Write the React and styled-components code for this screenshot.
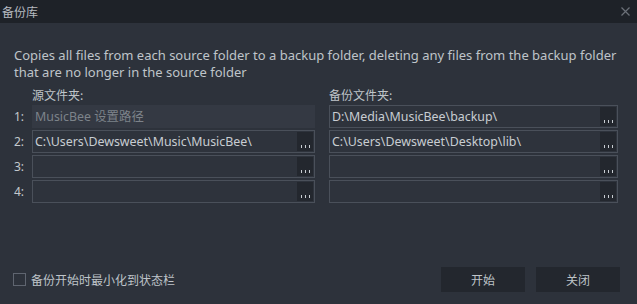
import React from "react";
import styled, { createGlobalStyle } from "styled-components";

const Global = createGlobalStyle`
  html, body { margin: 0; padding: 0; background: #2d323b; }
  body { font-family: "Noto Sans", "Noto Sans CJK SC", sans-serif; }
`;

const Window = styled.div`
  width: 637px;
  height: 304px;
  background: #2d323b;
  display: flex;
  flex-direction: column;
  color: #c3c8cd;
  overflow: hidden;
`;

const TitleBar = styled.div`
  height: 23px;
  background: #1e2228;
  display: flex;
  align-items: center;
  justify-content: space-between;
  padding: 0 7px 0 2px;
  flex-shrink: 0;
`;

const Title = styled.span`
  font-size: 12px;
  color: #b6bbc0;
  font-family: "Noto Sans CJK SC", sans-serif;
`;

const Body = styled.div`
  flex: 1;
  display: flex;
  flex-direction: column;
  padding: 24px 14px 0 14px;
`;

const Desc = styled.p`
  margin: 0;
  font-size: 13px;
  line-height: 17px;
  color: #bfc4c9;
  white-space: nowrap;
`;

const Table = styled.div`
  display: grid;
  grid-template-columns: 18px 283px 303px;
  column-gap: 0;
  row-gap: 2px;
  margin-top: 6px;
`;

const HeadLabel = styled.div`
  font-size: 12px;
  font-family: "Noto Sans CJK SC", sans-serif;
  color: #bfc4c9;
  height: 16px;
  line-height: 16px;
  margin-left: ${(p) => (p.$right ? "14px" : "0")};
`;

const RowNum = styled.div`
  font-size: 12px;
  color: #c3c8cd;
  height: 23px;
  line-height: 23px;
`;

const Field = styled.div`
  height: 23px;
  box-sizing: border-box;
  border: 1px solid ${(p) => (p.$disabled ? "#343943" : "#4a505a")};
  background: ${(p) => (p.$disabled ? "#343943" : "#2e333c")};
  display: flex;
  align-items: stretch;
  margin-left: ${(p) => (p.$right ? "14px" : "0")};
`;

const FieldText = styled.div`
  flex: 1;
  font-size: 12.4px;
  line-height: 21px;
  padding-left: 2px;
  color: ${(p) => (p.$disabled ? "#7d838a" : "#c8cdd2")};
  white-space: nowrap;
  overflow: hidden;
  font-family: "Noto Sans", "Noto Sans CJK SC", sans-serif;
`;

const Browse = styled.div`
  width: 16px;
  margin: 1px 1px 1px 0;
  background: #23272e;
  display: flex;
  align-items: flex-end;
  justify-content: center;
  padding-bottom: 3px;
  box-sizing: border-box;
  gap: 3px;
`;

const Dot = styled.span`
  width: 1px;
  height: 3px;
  background: #c8cdd2;
`;

const Footer = styled.div`
  margin-top: auto;
  display: flex;
  align-items: center;
  padding: 0 17px 12px 13px;
`;

const Check = styled.label`
  display: flex;
  align-items: center;
  gap: 5px;
  font-size: 12px;
  font-family: "Noto Sans CJK SC", sans-serif;
  color: #bfc4c9;
  flex: 1;
`;

const Box = styled.span`
  width: 13px;
  height: 13px;
  box-sizing: border-box;
  border: 1px solid #5f6570;
`;

const Button = styled.button`
  width: 84px;
  height: 25px;
  border: none;
  background: #23272e;
  color: #bfc4c9;
  font-size: 12px;
  font-family: "Noto Sans CJK SC", sans-serif;
  margin-left: ${(p) => (p.$gap ? "11px" : "0")};
  padding: 0;
`;

const Close = () => (
  <svg width="9" height="9" viewBox="0 0 9 9">
    <path d="M0.5 0.5L8.5 8.5M8.5 0.5L0.5 8.5" stroke="#6b7078" strokeWidth="1.2" />
  </svg>
);

const BrowseBtn = () => (
  <Browse>
    <Dot />
    <Dot />
    <Dot />
  </Browse>
);

const rows = [
  { n: "1:", src: "MusicBee 设置路径", srcDisabled: true, dst: "D:\\Media\\MusicBee\\backup\\" },
  { n: "2:", src: "C:\\Users\\Dewsweet\\Music\\MusicBee\\", dst: "C:\\Users\\Dewsweet\\Desktop\\lib\\" },
  { n: "3:", src: "", dst: "" },
  { n: "4:", src: "", dst: "" },
];

export default function App() {
  return (
    <Window>
      <Global />
      <TitleBar>
        <Title>备份库</Title>
        <Close />
      </TitleBar>
      <Body>
        <Desc>
          Copies all files from each source folder to a backup folder, deleting any files from the backup folder
          <br />
          that are no longer in the source folder
        </Desc>
        <Table>
          <span />
          <HeadLabel>源文件夹:</HeadLabel>
          <HeadLabel $right>备份文件夹:</HeadLabel>
          {rows.map((r) => (
            <React.Fragment key={r.n}>
              <RowNum>{r.n}</RowNum>
              <Field $disabled={r.srcDisabled}>
                <FieldText $disabled={r.srcDisabled}>{r.src}</FieldText>
                {!r.srcDisabled && <BrowseBtn />}
              </Field>
              <Field $right>
                <FieldText>{r.dst}</FieldText>
                <BrowseBtn />
              </Field>
            </React.Fragment>
          ))}
        </Table>
      </Body>
      <Footer>
        <Check>
          <Box />
          备份开始时最小化到状态栏
        </Check>
        <Button>开始</Button>
        <Button $gap>关闭</Button>
      </Footer>
    </Window>
  );
}
